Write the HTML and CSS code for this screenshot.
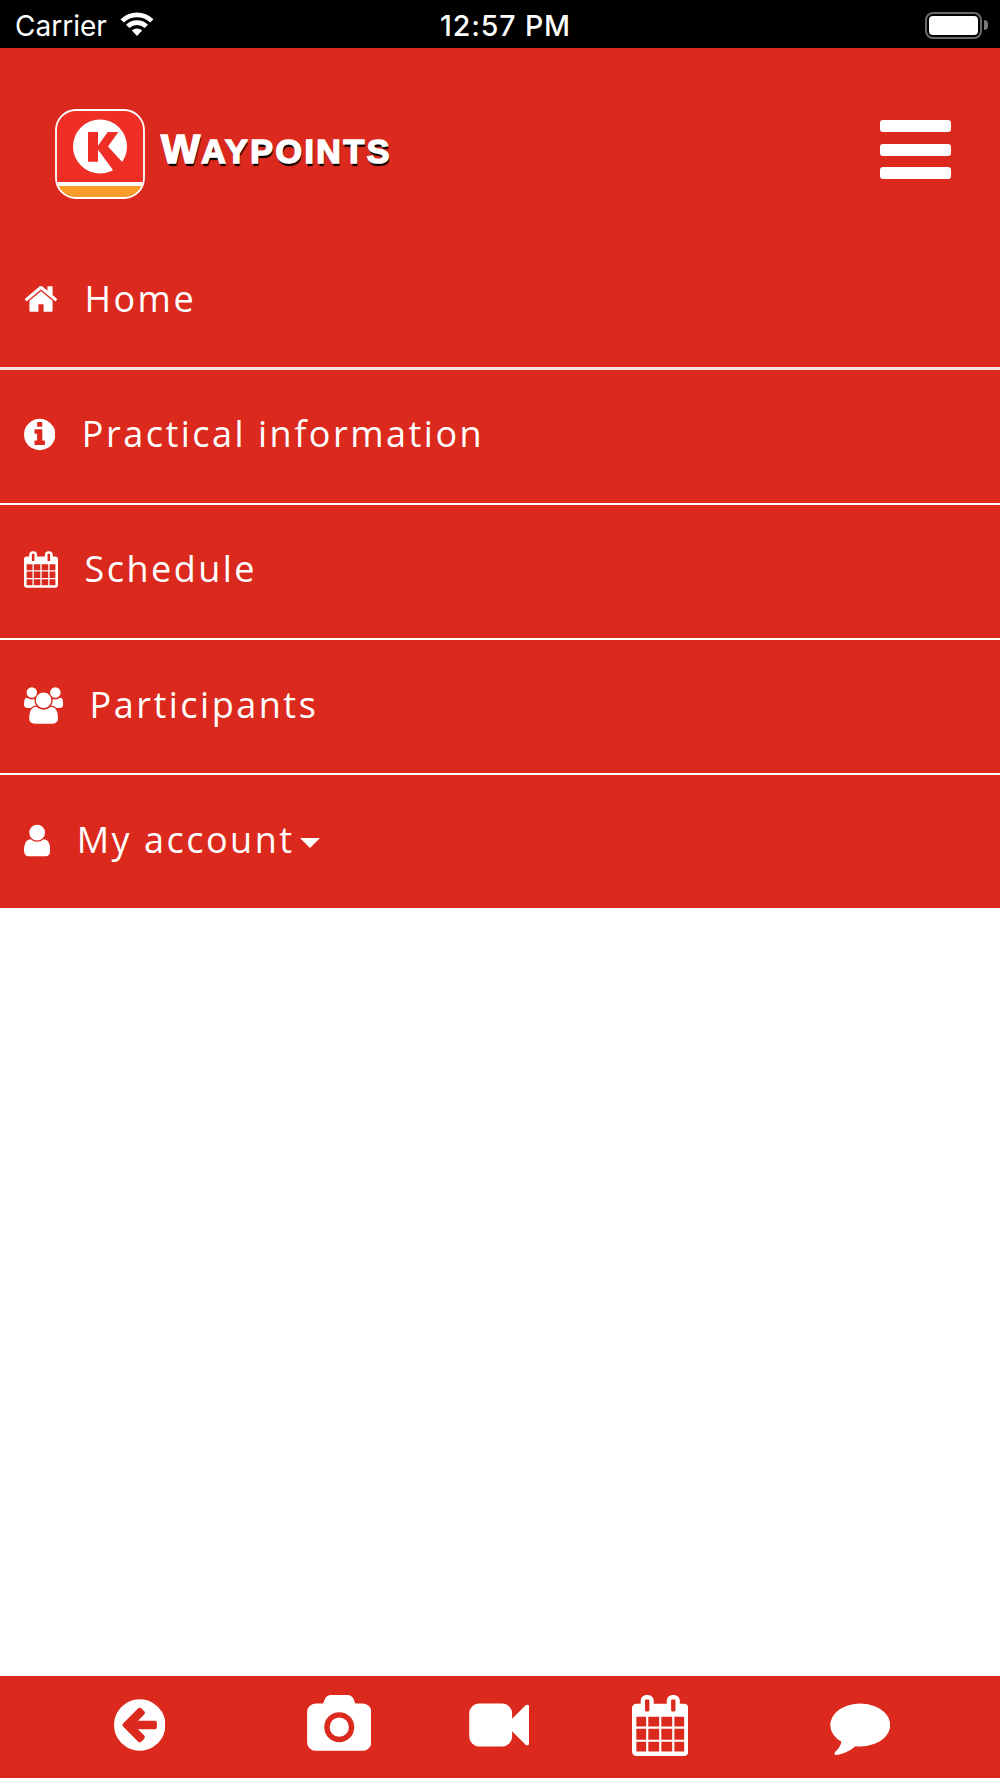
FILE: index.html
```html
<!DOCTYPE html>
<html lang="en">
<head>
    <meta charset="UTF-8">
    <meta name="viewport" content="width=device-width, initial-scale=1.0">
    <title>Waypoints</title>
    <link rel="stylesheet" href="styles.css">
</head>
<body>
    <!-- calendar is used in the menu and in the footer -->
    <svg width="0" height="0" class="defs">
        <symbol id="calendar" viewBox="64 0 1664 1792">
            <path d="M192 1664h288v-288h-288v288zm352 0h320v-288h-320v288zm-352-352h288v-320h-288v320zm352 0h320v-320h-320v320zm-352-384h288v-288h-288v288zm736 736h320v-288h-320v288zm-384-736h320v-288h-320v288zm768 736h288v-288h-288v288zm-384-352h320v-320h-320v320zm-352-864v-288q0-13-9.5-22.5t-22.5-9.5h-64q-13 0-22.5 9.5t-9.5 22.5v288q0 13 9.5 22.5t22.5 9.5h64q13 0 22.5-9.5t9.5-22.5zm736 864h288v-320h-288v320zm-384-384h320v-288h-320v288zm384 0h288v-288h-288v288zm32-480v-288q0-13-9.5-22.5t-22.5-9.5h-64q-13 0-22.5 9.5t-9.5 22.5v288q0 13 9.5 22.5t22.5 9.5h64q13 0 22.5-9.5t9.5-22.5zm384-64v1280q0 52-38 90t-90 38h-1408q-52 0-90-38t-38-90v-1280q0-52 38-90t90-38h128v-96q0-66 47-113t113-47h64q66 0 113 47t47 113v96h384v-96q0-66 47-113t113-47h64q66 0 113 47t47 113v96h128q52 0 90 38t38 90z"/>
        </symbol>
    </svg>

    <div class="wrapper">
        <div class="status">
            <div class="carrier">
                <span>Carrier</span>
                <svg class="wifi" width="34" height="25" viewBox="0 0 34 25">
                    <path d="M0.5 7.2Q7.5 0.5 17 0.5T33.5 7.2L30.2 10.6Q24.5 5.2 17 5.2T3.8 10.6Z"/>
                    <path d="M6 12.7Q10.8 8.3 17 8.3T28 12.7L24.6 16.1Q21.2 13 17 13T9.4 16.1Z"/>
                    <path d="M11.8 18.5Q14 16.4 17 16.4T22.2 18.5L17 24Z"/>
                </svg>
            </div>
            <div class="time">12:57 PM</div>
            <div class="battery">
                <div class="battery-body"><div class="battery-level"></div></div>
                <div class="battery-tip"></div>
            </div>
        </div>

        <div class="header">
            <div class="brand">
                <svg width="90" height="90" viewBox="0 0 90 90">
                    <defs>
                        <clipPath id="tile"><rect x="1.5" y="1.5" width="87" height="87" rx="20"/></clipPath>
                    </defs>
                    <g clip-path="url(#tile)">
                        <rect width="90" height="90" fill="#ef2e25"/>
                        <rect y="73" width="90" height="4" fill="#fff"/>
                        <rect y="77" width="90" height="13" fill="#f89c2a"/>
                    </g>
                    <rect x="1" y="1" width="88" height="88" rx="20" fill="none" stroke="#fff" stroke-width="1.8"/>
                    <circle cx="45" cy="37.5" r="27" fill="#fff"/>
                    <path d="M33 23H43V36.8L52.7 23H63.4L53 37.4L69.5 55.5L60.5 64.500L43 40.500V52.8H33Z" fill="#ef2e25"/>
                </svg>
                <span class="brand-name"><span class="big">W</span>AYPOINTS</span>
            </div>
            <div class="bars"><span></span><span></span><span></span></div>
        </div>

        <div class="menu">
            <a class="item">
                <svg width="34" height="36" viewBox="64 0 1664 1792"><path d="M1472 992v480q0 26-19 45t-45 19h-384v-384h-256v384h-384q-26 0-45-19t-19-45v-480q0-1 .5-3t.5-3l575-474 575 474q1 2 1 6zm223-69l-62 74q-8 9-21 11h-3q-13 0-21-7l-692-577-692 577q-12 8-24 7-13-2-21-11l-62-74q-8-10-7-23.5t11-21.5l719-599q32-26 76-26t76 26l244 204v-195q0-14 9-23t23-9h192q14 0 23 9t9 23v408l219 182q10 8 11 21.5t-7 23.5z"/></svg>
                <span>Home</span>
            </a>
            <a class="item">
                <svg width="31.4" height="37" viewBox="128 0 1536 1792"><path d="M1152 1376v-160q0-14-9-23t-23-9h-96v-512q0-14-9-23t-23-9h-320q-14 0-23 9t-9 23v160q0 14 9 23t23 9h96v320h-96q-14 0-23 9t-9 23v160q0 14 9 23t23 9h448q14 0 23-9t9-23zm-128-896v-160q0-14-9-23t-23-9h-192q-14 0-23 9t-9 23v160q0 14 9 23t23 9h192q14 0 23-9t9-23zm640 416q0 209-103 385.5t-279.5 279.5-385.5 103-385.5-103-279.5-279.5-103-385.5 103-385.5 279.5-279.5 385.5-103 385.5 103 279.5 279.5 103 385.5z"/></svg>
                <span>Practical information</span>
            </a>
            <a class="item">
                <svg width="34" height="37"><use href="#calendar"/></svg>
                <span>Schedule</span>
            </a>
            <a class="item">
                <svg width="39.2" height="37" viewBox="-64 0 1920 1792"><path d="M529 896q-162 5-265 128h-134q-82 0-138-40.500t-56-118.500q0-353 124-353 6 0 43.500 21t97.500 42.500 119 21.500q67 0 133-23-5 37-5 66 0 139 81 256zm1071 637q0 120-73 189.500t-194 69.500h-874q-121 0-194-69.500t-73-189.500q0-53 3.500-103.500t14-109 26.500-108.500 43-97.500 62-81 85.500-53.500 111.500-20q10 0 43 21.500t73 48 107 48 135 21.500 135-21.500 107-48 73-48 43-21.500q61 0 111.500 20t85.500 53.500 62 81 43 97.500 26.500 108.500 14 109 3.500 103.500zm-1024-1277q0 106-75 181t-181 75-181-75-75-181 75-181 181-75 181 75 75 181zm704 384q0 159-112.500 271.500t-271.500 112.500-271.500-112.500-112.500-271.500 112.500-271.500 271.500-112.500 271.500 112.500 112.500 271.500zm576 225q0 78-56 118.500t-138 40.500h-134q-103-123-265-128 81-117 81-256 0-29-5-66 66 23 133 23 59 0 119-21.500t97.500-42.500 43.500-21q124 0 124 353zm-128-609q0 106-75 181t-181 75-181-75-75-181 75-181 181-75 181 75 75 181z"/></svg>
                <span>Participants</span>
            </a>
            <a class="item">
                <svg width="26.3" height="37" viewBox="256 0 1280 1792"><path d="M1536 1399q0 109-62.500 187t-150.500 78h-854q-88 0-150.500-78t-62.500-187q0-85 8.500-160.500t31.500-152 58.500-131 94-89 134.500-34.500q131 128 313 128t313-128q76 0 134.500 34.500t94 89 58.500 131 31.500 152 8.500 160.500zm-256-887q0 159-112.500 271.500t-271.500 112.500-271.500-112.500-112.500-271.500 112.500-271.500 271.500-112.500 271.500 112.500 112.500 271.500z"/></svg>
                <span>My account</span>
                <i class="caret"></i>
            </a>
        </div>

        <div class="content"></div>

        <div class="footer">
            <a class="back"><svg width="51.5" height="60" viewBox="128 0 1536 1792"><path d="M1408 960v-128q0-26-19-45t-45-19h-502l189-189q19-19 19-45t-19-45l-91-91q-18-18-45-18t-45 18l-362 362-91 91q-18 18-18 45t18 45l91 91 362 362q18 18 45 18t45-18l91-91q18-18 18-45t-18-45l-189-189h502q26 0 45-19t19-45zm256-64q0 209-103 385.500t-279.500 279.500-385.500 103-385.500-103-279.500-279.500-103-385.500 103-385.500 279.500-279.500 385.500-103 385.500 103 279.500 279.500 103 385.500z"/></svg></a>
            <a class="photo"><svg width="64.500" height="60" viewBox="0 0 1920 1792"><path d="M960 672q119 0 203.500 84.500t84.500 203.500-84.500 203.500-203.500 84.500-203.500-84.500-84.500-203.500 84.500-203.500 203.500-84.500zm704-416q106 0 181 75t75 181v896q0 106-75 181t-181 75h-1408q-106 0-181-75t-75-181v-896q0-106 75-181t181-75h224l51-136q19-49 69.500-84.500t103.500-35.500h512q53 0 103.500 35.500t69.500 84.500l51 136h224zm-704 1152q185 0 316.500-131.500t131.500-316.500-131.500-316.500-316.500-131.500-316.500 131.500-131.500 316.500 131.500 316.500 316.500 131.500z"/></svg></a>
            <a class="video"><svg width="60.500" height="60" viewBox="0 0 1792 1792"><path d="M1792 352v1088q0 42-39 59-13 5-25 5-27 0-45-19l-403-403v166q0 119-84.500 203.500t-203.500 84.500h-704q-119 0-203.500-84.500t-84.500-203.500v-704q0-119 84.500-203.500t203.500-84.500h704q119 0 203.500 84.500t84.500 203.500v165l403-402q18-19 45-19 12 0 25 5 39 17 39 59z"/></svg></a>
            <a class="agenda"><svg width="56.500" height="61"><use href="#calendar"/></svg></a>
            <a class="chat"><svg width="60.500" height="60" viewBox="0 0 1792 1792"><path d="M1792 896q0 174-120 321.500t-326 233-450 85.500q-70 0-145-8-198 175-460 242-49 14-114 22-17 2-30.500-9t-17.500-29v-1q-3-4-.5-12t2-10 4.500-9.500l6-9 7-8.500 8-9q7-8 31-34.500t34.500-38 31-39.500 32.500-51 27-59 26-76q-157-89-247.500-220t-90.500-281q0-130 71-248.500t191-204.500 286-136.500 348-50.500q244 0 450 85.500t326 233 120 321.500z"/></svg></a>
        </div>
    </div>
</body>
</html>
```
FILE: styles.css
```css
*{
    box-sizing: border-box;
}
body{
    margin: 0;
    background-color: #fff;
}
svg{
    display: block;
    fill: #fff;
    flex-shrink: 0;
}
.defs{
    position: absolute;
}
.wrapper{
    height: 1778px;
    display: flex;
    flex-direction: column;
}

/* status bar */
.status{
    height: 48px;
    padding: 0 12px 0 15px;
    display: grid;
    grid-template-columns: 1fr auto 1fr;
    align-items: center;
    background-color: #000;
    color: #fff;
    font-family: Inter, "Liberation Sans", sans-serif;
    font-size: 28px;
    line-height: 48px;
}
.carrier{
    display: flex;
    align-items: center;
    gap: 13px;
    padding-top: 2px;
}
.carrier svg{
    margin-bottom: 3px;
}
.time{
    padding: 2px 0 0 5px;
    font-weight: 500;
    font-size: 28.5px;
    letter-spacing: 0.9px;
    margin-right: -3px;
}
.battery{
    display: flex;
    align-items: center;
    justify-content: flex-end;
    gap: 2px;
}
.battery-body{
    width: 57px;
    height: 27px;
    padding: 2px;
    border: 2px solid #6a6a6a;
    border-radius: 8px;
}
.battery-level{
    height: 19px;
    border-radius: 4px;
    background-color: #fff;
}
.battery-tip{
    width: 4px;
    height: 10px;
    border-radius: 0 4px 4px 0;
    background-color: #7a7a7a;
}

/* header */
.header{
    height: 186px;
    padding: 61px 49px 0 55px;
    display: flex;
    justify-content: space-between;
    align-items: flex-start;
    background-color: #db291d;
}
.brand{
    display: flex;
    gap: 16px;
}
.brand-name{
    padding-top: 15px;
    font-family: "Liberation Sans", Arial, sans-serif;
    font-weight: bold;
    font-size: 34px;
    line-height: 50px;
    letter-spacing: 2.5px;
    color: #fff;
    -webkit-text-stroke: 1.6px #fff;
    text-shadow: 1px 3px 1px #000;
}
.big{
    font-size: 41.5px;
    letter-spacing: 1px;
}
.bars{
    padding-top: 11px;
    display: flex;
    flex-direction: column;
    gap: 11.5px;
}
.bars span{
    width: 71px;
    height: 12px;
    border-radius: 3px;
    background-color: #fff;
}

/* menu */
.menu{
    background-color: #db291d;
}
.item{
    height: 135px;
    padding: 46px 24px 0;
    display: flex;
    align-items: flex-start;
    border-bottom: 2px solid #fff;
    font-family: "Open Sans", sans-serif;
    font-size: 36px;
    line-height: 36px;
    letter-spacing: 2.5px;
    color: #fff;
}
.item span{
    margin-left: 26.4px;
}
.item:first-child{
    height: 136px;
    padding-top: 47px;
    border-bottom: 3px solid #f6e2e0;
}
.item:nth-child(n+4){
    padding-top: 47px;
}
.item:nth-child(n+4) svg{
    margin-top: -0.5px;
}
.item:last-child{
    height: 133px;
    border-bottom: none;
}
.caret{
    margin: 16px 0 0 5px;
    border-top: 10px solid #fff;
    border-left: 10px solid transparent;
    border-right: 10px solid transparent;
}

.content{
    flex: 1;
}

/* footer */
.footer{
    height: 102px;
    padding: 18.5px 109px 0 113.5px;
    display: flex;
    background-color: #db291d;
}
.photo{
    margin-left: 141.5px;
}
.video{
    margin-left: 97.5px;
}
.agenda{
    margin-left: 102.5px;
}
.chat{
    margin-left: 141.5px;
}
```
